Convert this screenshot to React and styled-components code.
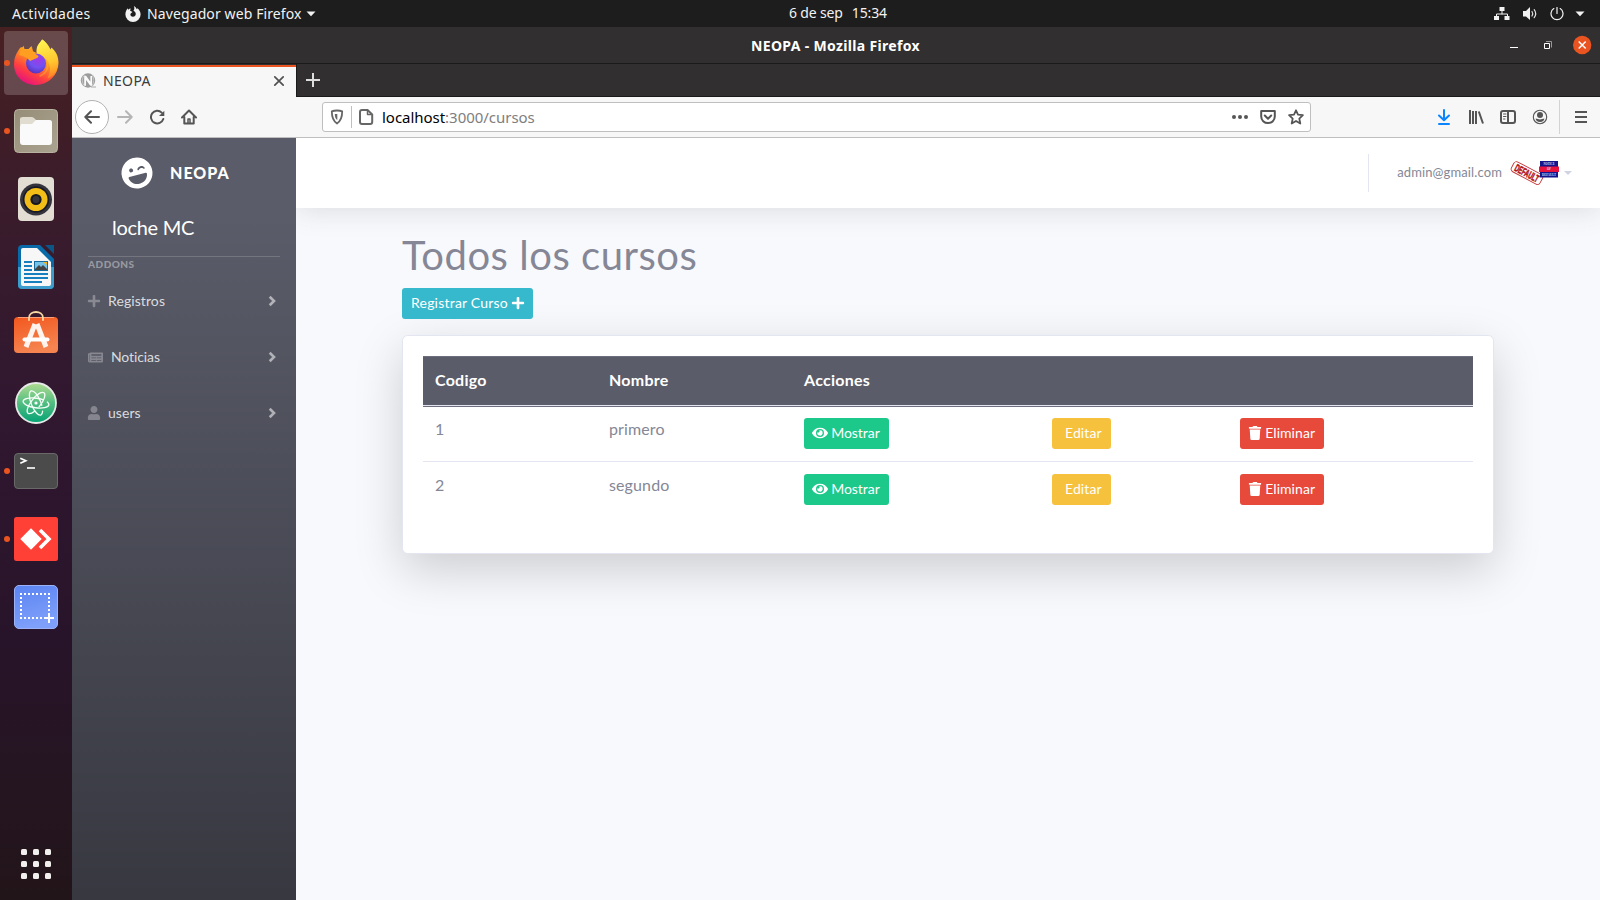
import React from "react";
import styled, { createGlobalStyle } from "styled-components";
import { FaEye, FaLaughWink, FaNewspaper, FaPlus, FaTrash, FaUser } from "react-icons/fa";

const GlobalStyle = createGlobalStyle`
  *, *::before, *::after { box-sizing: border-box; }
  html, body { margin: 0; padding: 0; overflow: hidden; }
  body { background: #1d1d1d; }
  svg { display: block; flex: none; }
`;

const uiFont = `"Noto Sans", "Open Sans", sans-serif`;
const webFont = `Lato, "Open Sans", sans-serif`;

const Desktop = styled.div`
  width: 1600px;
  height: 900px;
  display: grid;
  grid-template-rows: 27px 873px;
  overflow: hidden;
`;

/* ---------- system bar ---------- */
const SystemBar = styled.header`
  display: flex;
  align-items: center;
  background: #1d1d1d;
  color: #f2f2f2;
  font: 14px/26px ${uiFont};
  white-space: pre;
`;
const Activities = styled.span`
  width: 125px;
  padding-left: 12px;
  letter-spacing: 0.35px;
`;
const AppMenu = styled.div`
  display: flex;
  align-items: center;
  width: 664px;
  letter-spacing: 0.11px;
  svg:first-child { margin-right: 6px; }
  svg:last-child { margin-left: 4px; }
`;
const Clock = styled.span`
  flex: 1;
  display: flex;
  gap: 9px;
  padding-bottom: 2px;
  letter-spacing: -0.15px;
`;
const Tray = styled.div`
  display: flex;
  align-items: center;
  padding-right: 15px;
  svg + svg { margin-left: 12px; }
  svg:last-child { margin-left: 11px; }
`;

/* ---------- dock ---------- */
const Body = styled.div`
  display: grid;
  grid-template-columns: 72px 1528px;
`;
const Dock = styled.nav`
  display: flex;
  flex-direction: column;
  gap: 4px;
  padding: 4px;
  background: linear-gradient(180deg, #472022 0%, #3a1c2b 20%, #311830 42%, #28142a 70%, #221519 100%);
`;
const DockItem = styled.div`
  height: 64px;
  border-radius: 4px;
  background: ${(p) => (p.$active ? "rgba(255,255,255,0.19)" : "transparent")};
  svg { overflow: visible; }
`;
const AppsButton = styled.div`
  margin-top: auto;
  height: 64px;
`;

/* ---------- browser ---------- */
const Browser = styled.section`
  display: grid;
  grid-template-rows: 37px 33px 41px 762px;
`;
const TitleBar = styled.div`
  display: flex;
  align-items: center;
  background: #322f30;
  border-bottom: 1px solid #1b1a1b;
  color: #fff;
  font: 700 14px/36px ${uiFont};
`;
const WindowTitle = styled.span`
  flex: 1;
  padding: 2px 0 0 679px;
  line-height: 34px;
  letter-spacing: 0.34px;
`;
const WindowControls = styled.div`
  display: flex;
  align-items: center;
  padding-right: 8px;
`;
const TabStrip = styled.div`
  display: flex;
  background: #322f30;
`;
const Tab = styled.div`
  width: 224px;
  margin-top: 1px;
  height: 32px;
  display: flex;
  align-items: center;
  padding: 0 11px 2px 8px;
  background: #f7f7f7;
  border-top: 2px solid #e95420;
  color: #3c3c3c;
  font: 14px/28px ${uiFont};
  letter-spacing: 0.35px;
  svg:last-child { margin-left: auto; }
`;
const TabLabel = styled.span`padding-left: 7px;`;
const TabFill = styled.div`
  flex: 1;
  padding: 9px 0 0 9px;
  border-bottom: 1px solid #1b1a1b;
  border-left: 1px solid #1b1a1b;
`;
const Toolbar = styled.div`
  display: flex;
  align-items: center;
  padding: 0 11px 0 3px;
  background: #f7f7f7;
  border-bottom: 1px solid #bfbfbf;
`;
const BackButton = styled.div`
  width: 34px;
  height: 34px;
  display: grid;
  place-items: center;
  border: 1px solid #b2b2b2;
  border-radius: 50%;
  background: #fff;
`;
const NavButtons = styled.div`
  display: flex;
  gap: 16px;
  margin-left: 8px;
`;
const UrlBar = styled.div`
  width: 989px;
  height: 30px;
  margin-left: 125px;
  display: flex;
  align-items: center;
  padding: 0 6px;
  border: 1px solid #bfbfbf;
  border-radius: 3px;
  background: #fff;
  font: 15px/28px ${uiFont};
  color: #7e7e7e;
`;
const UrlDivider = styled.i`
  width: 1px;
  height: 22px;
  margin: 0 6px;
  background: #bfbfbf;
`;
const Url = styled.span`
  flex: 1;
  padding-left: 8px;
  letter-spacing: -0.03px;
  b { font-weight: 400; color: #000; }
`;
const UrlActions = styled.div`
  display: flex;
  gap: 12px;
`;
const ToolbarActions = styled.div`
  display: flex;
  gap: 16px;
  margin-left: auto;
`;
const ToolbarDivider = styled.i`
  width: 1px;
  height: 34px;
  margin: 0 13px 0 11px;
  background: #d3d3d3;
`;

/* ---------- web page ---------- */
const Page = styled.div`
  display: grid;
  grid-template-columns: 224px 1304px;
  overflow: hidden;
  font-family: ${webFont};
`;
const Sidebar = styled.aside`
  position: relative;
  z-index: 1;
  background: linear-gradient(180deg, #5a5c69 10%, #373840 100%);
  color: #fff;
`;
const Brand = styled.div`
  height: 70px;
  display: flex;
  align-items: center;
  padding: 0 0 1px 49px;
  font-weight: 900;
  font-size: 16px;
  letter-spacing: 1px;
  svg { margin-right: 17px; transform: rotate(-15deg); }
`;
const BrandText = styled.span`padding-bottom: 1px;`;
const UserName = styled.div`
  height: 48px;
  padding: 7px 0 0 40px;
  font-size: 20px;
  line-height: 24px;
  letter-spacing: -0.3px;
`;
const Divider = styled.hr`
  margin: 0 16px;
  border: 0;
  border-top: 1px solid rgba(255, 255, 255, 0.17);
`;
const Heading = styled.div`
  height: 16px;
  padding-left: 16px;
  color: rgba(255, 255, 255, 0.4);
  font-size: 10px;
  font-weight: 900;
  line-height: 15px;
  letter-spacing: 0.5px;
`;
const NavItem = styled.div`
  height: 56px;
  display: flex;
  align-items: center;
  padding: 0 20px 0 16px;
  color: rgba(255, 255, 255, 0.8);
  font-size: 14px;
  letter-spacing: ${(p) => p.$spacing || 0}px;
  > svg:first-child { color: rgba(255, 255, 255, 0.3); margin: 0 ${(p) => (p.$wide ? "8px 0 0" : "7px 0 -1px")}; }
  > svg:last-child { color: rgba(255, 255, 255, 0.55); margin-left: auto; }
`;
const NavText = styled.span`padding-bottom: 1px;`;
const Content = styled.main`
  display: flex;
  flex-direction: column;
  background: #f8f9fc;
  overflow: hidden;
`;
const Topbar = styled.div`
  height: 70px;
  flex: none;
  display: flex;
  align-items: center;
  justify-content: flex-end;
  padding-right: 28px;
  background: #fff;
  box-shadow: 0 2.4px 28px 0 rgba(58, 59, 69, 0.15);
`;
const TopbarDivider = styled.i`
  width: 1px;
  height: 38px;
  margin-right: 28px;
  background: #e3e6f0;
`;
const Email = styled.span`
  padding-bottom: 3px;
  margin-right: 9px;
  color: #858796;
  font-size: 13px;
  letter-spacing: 0.12px;
`;
const Caret = styled.i`
  width: 8px;
  margin-left: 5px;
  border: 4px solid transparent;
  border-top-color: #d1d3e2;
  border-bottom: 0;
`;
const Container = styled.div`
  width: 1140px;
  margin: 0 auto;
  padding: 24px;
`;
const Title = styled.h1`
  height: 48px;
  margin: 0 0 8px;
  color: #858796;
  font-size: 40px;
  font-weight: 400;
  line-height: 46px;
  letter-spacing: 0.53px;
`;
const tones = { info: "#36b9cc", success: "#1cc88a", warning: "#f6c23e", danger: "#e74a3b" };
const Button = styled.a`
  height: 31px;
  display: inline-flex;
  align-items: center;
  gap: 4px;
  padding: 0 9px;
  border-radius: 3px;
  vertical-align: top;
  background: ${(p) => tones[p.$tone]};
  color: #fff;
  font-size: 14px;
  line-height: 29px;
  letter-spacing: ${(p) => p.$spacing || 0}px;
  svg { margin: 0 -0.9px 1px; }
`;
const ButtonText = styled.span`
  padding: 0 0 2px ${(p) => (p.$indent ? 4 : 0)}px;
`;
const Card = styled.div`
  height: 219px;
  margin-top: 16px;
  padding: 20px;
  border: 1px solid #e3e6f0;
  border-radius: 5.6px;
  background: #fff;
  box-shadow: 0 16px 48px rgba(0, 0, 0, 0.175);
`;
const Table = styled.table`
  width: 1050px;
  table-layout: fixed;
  border-spacing: 0;
  color: #858796;
  font-size: 16px;
  line-height: 22px;
`;
const Th = styled.th`
  height: 50px;
  padding: 0 12px 3px;
  border-top: 1px solid #6c6e7e;
  border-bottom: 1px solid #e3e6f0;
  background: #5a5c69;
  color: #fff;
  text-align: left;
  font-weight: 700;
  letter-spacing: 0.25px;
`;
const Td = styled.td`
  padding: ${(p) => (p.$first ? 11 : 12)}px 12px 12px;
  border-top: 1px solid ${(p) => (p.$first ? "#6c6e7e" : "#e3e6f0")};
  vertical-align: top;
  letter-spacing: 0.12px;
`;

/* ---------- drawings ---------- */
const stroke = (color, width = 2) => ({ fill: "none", stroke: color, strokeWidth: width, strokeLinecap: "round", strokeLinejoin: "round" });
const INK = "#555";

const DownCaret = () => <svg width="10" height="6" viewBox="0 0 10 6"><path d="M.5.5h9L5 5.3z" fill="#f2f2f2" /></svg>;

const Chevron = () => <svg width="8" height="12" viewBox="0 0 8 12"><path d="M1.700 1.800L6 6l-4.300 4.200" fill="none" stroke="currentColor" strokeWidth="2.600" /></svg>;

const FirefoxGlyph = () => (
  <svg width="16" height="16" viewBox="0 0 16 16">
    <path fill="#f2f2f2" d="M8.900 0c1.600 1.100 2.500 2.100 2.900 3.200l.7-.9c1.800 1.500 3.100 3.700 3.100 6.100a7.600 7.600 0 0 1-15.200 0C.4 6 1.300 4 2.500 2.200l.6 1.600C4 3 4.900 2.600 5.700 2.600L5.100 4.700 7.500 6 6 7.200c-1.200.9-.6 3.400 1.800 3.500 2.100 0 3.300-1.600 2.900-3.500-.3-1.300-1.100-2-2.300-2.500 1-.6 1.300-2.700.5-4.700z" />
  </svg>
);

const TrayIcons = () => (
  <>
    <svg width="16" height="14" viewBox="0 0 16 14"><path d="M8 4v3M2.500 9V7h11v2" {...stroke("#f2f2f2", 1)} /><path fill="#f2f2f2" d="M5.500 0h5v4h-5zM0 9h5v4H0zM10.500 9h5v4h-5z" /></svg>
    <svg width="16" height="14" viewBox="0 0 16 14"><path fill="#f2f2f2" d="M1 4h3l4-4v13L4 9.500H1z" /><path d="M10 4.500q1.500 2.200 0 4.500M12.200 2.700q3 4 0 8" {...stroke("#e2e2e2", 1.200)} /></svg>
    <svg width="14" height="14" viewBox="0 0 14 14"><path d="M7 .5v6M3.800 1.600a6 6 0 1 0 6.400 0" {...stroke("#f2f2f2", 1.200)} /></svg>
    <DownCaret />
  </>
);

const FirefoxIcon = () => (
  <svg width="64" height="64" viewBox="0 0 64 64">
    <defs>
      <linearGradient id="ffBody" x1=".8" y1=".1" x2=".3" y2="1"><stop offset="0" stopColor="#ffe83b" /><stop offset=".4" stopColor="#ff9a1f" /><stop offset=".72" stopColor="#ff4040" /><stop offset="1" stopColor="#e5117f" /></linearGradient>
      <linearGradient id="ffFlame" x1=".5" y1="0" x2=".7" y2="1"><stop offset="0" stopColor="#fff44f" /><stop offset=".6" stopColor="#ffc52f" /><stop offset="1" stopColor="#ff8a24" stopOpacity=".7" /></linearGradient>
      <radialGradient id="ffGlobe" cx=".6" cy=".3" r=".8"><stop offset="0" stopColor="#a238e8" /><stop offset=".5" stopColor="#7251f0" /><stop offset="1" stopColor="#512bb0" /></radialGradient>
    </defs>
    <path fill="url(#ffBody)" d="M38 8.500c5 3 7 7 8.500 10l1-2c5 4.500 7 9 7 15.500A22.500 22.500 0 0 1 32 54C19 54 10 45 10 33c0-6 2-10 4-13l2-3c0 0 1-1 3-1l.5-1.500 1 3.500h4l3-3 1 5 4 2 1-6z" />
    <path fill="url(#ffFlame)" d="M38.500 8.500c5 4 6.500 8 8 11l1-2c5 5 7 11 6 17-1 7-5 11-10 13 4-8 3-14-1-19-4-4-10-4-10-8.500 0-5 2-7 6-11.500z" />
    <circle cx="32" cy="32.500" r="10" fill="url(#ffGlobe)" />
    <path fill="#ff9e20" d="M15 24l2-6 4 2 4-1 3-3 1 5 4 3c2 1 2 2 0 3l-7 3c-3-4-7-5-11-6z" />
    <path d="M42 26c4 9 1 16-6 19" {...stroke("#ffc83b", 1.500)} opacity=".4" />
  </svg>
);
const FilesIcon = () => (
  <svg width="64" height="64" viewBox="0 0 64 64">
    <defs><linearGradient id="files" x1="0" y1="0" x2="1" y2="1"><stop offset="0" stopColor="#968d78" /><stop offset="1" stopColor="#aaa38f" /></linearGradient></defs>
    <rect x="10.500" y="10.500" width="43" height="43" rx="4" fill="url(#files)" stroke="#b8b2a0" />
    <path d="M16 26V20q0-2 3-2h8q2 0 3 1l2 2h13q3 0 3 3v2z" fill="#e0dccf" />
    <path d="M16 27q0-2 2-2h10l4-4h13q3 0 3 3v19q0 3-3 3H19q-3 0-3-3z" fill="#fafafa" />
  </svg>
);
const MusicIcon = () => (
  <svg width="64" height="64" viewBox="0 0 64 64">
    <rect x="14" y="10" width="36" height="44" rx="4" fill="#e2ded3" />
    <circle cx="32" cy="32.500" r="16" fill="#34343c" /><circle cx="32" cy="32.500" r="13.200" fill="#191a28" />
    <circle cx="32" cy="32.500" r="11.500" fill="#f2bd17" /><circle cx="32" cy="32.500" r="5.600" fill="#17171e" /><circle cx="32" cy="32.500" r="3.500" fill="#32333b" />
  </svg>
);
const WriterIcon = () => (
  <svg width="64" height="64" viewBox="0 0 64 64">
    <path d="M14 14q0-4 4-4h18l14 14v26q0 4-4 4H18q-4 0-4-4z" fill="#0a6aa8" />
    <path d="M14 32h36v18q0 4-4 4H18q-4 0-4-4z" fill="#3c9ccb" />
    <path d="M17 15q0-2 2-2h14l14 14v22q0 2-2 2H19q-2 0-2-2z" fill="#f7f7f7" />
    <path d="M41 10h9v9z" fill="#0c5687" />
    <path d="M20 27h8M20 31h8M20 35h8M20 39h24M20 43h24M20 47h18" stroke="#1580bd" strokeWidth="2" />
    <path d="M30 26h14v10H30z" fill="#176b9b" /><path d="M31 27h12v8H31z" fill="#76c3ea" /><path d="M31 34l4-4 2 2 2-2 4 4v1H31z" fill="#444" /><path d="M39 27h4v3z" fill="#f3b51b" />
  </svg>
);
const StoreIcon = () => (
  <svg width="64" height="64" viewBox="0 0 64 64">
    <defs><linearGradient id="store" x1="0" y1="0" x2=".3" y2="1"><stop offset="0" stopColor="#f2571e" /><stop offset="1" stopColor="#f58450" /></linearGradient></defs>
    <rect x="10" y="14" width="44" height="36" rx="4" fill="url(#store)" /><path d="M14 14.500h36" stroke="#f8a17b" />
    <path d="M25 17v-2c0-8 14-8 14 0v2" {...stroke("#f7d8a5", 1.800)} />
    <path d="M31 21l-9 23M33 21l9 23" stroke="#fff4ed" strokeWidth="5" /><path d="M20.500 36.500h23" {...stroke("#fff", 4)} />
  </svg>
);
const AtomIcon = () => (
  <svg width="64" height="64" viewBox="0 0 64 64">
    <defs><linearGradient id="atom" x1="0" y1="0" x2="0" y2="1"><stop offset="0" stopColor="#b0dc91" /><stop offset=".5" stopColor="#53bd81" /><stop offset="1" stopColor="#02a275" /></linearGradient></defs>
    <circle cx="32" cy="32" r="20" fill="url(#atom)" stroke="#e6e9e6" strokeWidth="1.800" />
    <g transform="rotate(8 32 32)" {...stroke("#f4fff8", 1.300)}>
      <ellipse cx="32" cy="32" rx="13" ry="4.800" strokeDasharray="50 5" /><ellipse cx="32" cy="32" rx="13" ry="4.800" transform="rotate(60 32 32)" strokeDasharray="48 6" /><ellipse cx="32" cy="32" rx="13" ry="4.800" transform="rotate(120 32 32)" strokeDasharray="45 6" />
    </g>
    <circle cx="32" cy="32" r="1.600" fill="#fff" />
  </svg>
);
const TerminalIcon = () => (
  <svg width="64" height="64" viewBox="0 0 64 64">
    <rect x="10.500" y="14.500" width="43" height="35" rx="3.500" fill="#4b4b4b" stroke="#696969" />
    <path d="M16.300 19.300l5.500 2.500-5.500 2.500" fill="none" stroke="#fff" strokeWidth="1.700" /><path d="M23 29h8" stroke="#fff" strokeWidth="1.600" />
  </svg>
);
const RemoteIcon = () => (
  <svg width="64" height="64" viewBox="0 0 64 64">
    <rect x="10" y="10" width="44" height="44" rx="2.500" fill="#ff4037" />
    <path d="M27 21.300L37.700 32 27 42.700 16.300 32z" fill="#fff" /><path d="M36 23l9 9-9 9" fill="none" stroke="#fff" strokeWidth="3.600" />
  </svg>
);
const ScreenshotIcon = () => (
  <svg width="64" height="64" viewBox="0 0 64 64">
    <defs><linearGradient id="shot" x1="0" y1="0" x2=".3" y2="1"><stop offset="0" stopColor="#5b84f2" /><stop offset="1" stopColor="#7fa0fa" /></linearGradient></defs>
    <rect x="10.500" y="10.500" width="43" height="43" rx="4.500" fill="url(#shot)" stroke="#9ab3f8" />
    <path d="M16 19h30M17 22v22M45 22v18M16 43h24" fill="none" stroke="#fff" strokeWidth="2" strokeDasharray="2 2" /><path d="M45 38v10M40 43h10" stroke="#fff" strokeWidth="2" />
  </svg>
);
const RunningDot = styled.i`
  position: absolute;
  left: 4px;
  width: 6px;
  height: 6px;
  margin-top: 29px;
  border-radius: 50%;
  background: #e95420;
`;
const AppsGrid = () => (
  <svg width="64" height="64" viewBox="0 0 64 64">
    {[20, 32, 44].flatMap((y) => [20, 32, 44].map((x) => <rect key={`${x}-${y}`} x={x - 3} y={y - 3} width="6" height="6" rx="1.500" fill="#f2f0ef" />))}
  </svg>
);

const Favicon = () => (
  <svg width="16" height="16" viewBox="0 0 16 16">
    <circle cx="8" cy="7.500" r="7.200" fill="#9c9c9c" /><path d="M12.500 2.500q3 5-.5 10.500M4 2.500q-3.500 5 0 10" {...stroke("#c9c9c9", 0.9)} />
    <path d="M4.200 12.800V2.700h1.900l4.300 6V3h1.700v9.800h-1.800L6 6.900v5.900z" fill="#fafafa" /><path d="M11 14h5" stroke="#aaa" />
  </svg>
);
const Arrow = ({ flip, color }) => (
  <svg width="16" height="16" viewBox="0 0 16 16"><g transform={flip ? "rotate(180 8 8)" : undefined}><path d="M15 8H1.500M7 2.200L1.300 8 7 13.800" {...stroke(color)} /></g></svg>
);
const Icon = ({ children, color = INK }) => <svg width="16" height="16" viewBox="0 0 16 16" {...stroke(color)}>{children}</svg>;

const StampArt = styled.svg`overflow: visible;`;
const Stamp = () => (
  <StampArt width="48" height="26" viewBox="0 0 48 26">
    <g transform="rotate(28 16 13)" fontFamily="Liberation Sans, sans-serif" fontWeight="700">
      <rect x="-0.200" y="7.600" width="32.400" height="11" rx="3" fill="#fff" stroke="#c2373b" strokeWidth=".9" />
      <text x="3" y="16.900" fontSize="10.500" fill="#b3141b" stroke="#b3141b" strokeWidth=".6" textLength="26" lengthAdjust="spacingAndGlyphs">DEFAULT</text>
    </g>
    <rect x="29" y="1" width="18" height="16.500" fill="#14148c" /><rect x="28" y="6.500" width="20" height="5.500" fill="#e8123f" />
    <g fill="#dcdcf2" fontFamily="Liberation Serif, serif" fontWeight="700" fontSize="3" textAnchor="middle">
      <text x="38" y="4.900" textLength="11" lengthAdjust="spacingAndGlyphs">NOTICE</text><text x="38" y="10.300">OF</text><text x="38" y="15.800" textLength="14" lengthAdjust="spacingAndGlyphs">DEFAULT</text>
    </g>
  </StampArt>
);

const dock = [
  { Art: FirefoxIcon, running: true, active: true },
  { Art: FilesIcon, running: true },
  { Art: MusicIcon },
  { Art: WriterIcon },
  { Art: StoreIcon },
  { Art: AtomIcon },
  { Art: TerminalIcon, running: true },
  { Art: RemoteIcon, running: true },
  { Art: ScreenshotIcon },
];
const courses = [[1, "primero"], [2, "segundo"]];

export default function App() {
  return (
    <Desktop>
      <GlobalStyle />
      <SystemBar>
        <Activities>Actividades</Activities>
        <AppMenu><FirefoxGlyph />Navegador web Firefox<DownCaret /></AppMenu>
        <Clock><span>6 de sep</span><span>15:34</span></Clock>
        <Tray><TrayIcons /></Tray>
      </SystemBar>
      <Body>
        <Dock>
          {dock.map(({ Art, running, active }, i) => (
            <DockItem key={i} $active={active}>{running && <RunningDot />}<Art /></DockItem>
          ))}
          <AppsButton><AppsGrid /></AppsButton>
        </Dock>
        <Browser>
          <TitleBar>
            <WindowTitle>NEOPA - Mozilla Firefox</WindowTitle>
            <WindowControls>
              <svg width="82" height="20" viewBox="0 0 82 20">
                <path d="M0 12.500h8" stroke="#fff" />
                <path d="M36 6.500h5.500v6" fill="none" stroke="#999" /><path d="M34.500 8.500h5v5h-5z" fill="none" stroke="#fff" />
                <circle cx="72.200" cy="10" r="9.200" fill="#e95420" /><path d="M68.700 6.500l7 7m0-7l-7 7" stroke="#fff" strokeWidth="1.500" />
              </svg>
            </WindowControls>
          </TitleBar>
          <TabStrip>
            <Tab>
              <Favicon /><TabLabel>NEOPA</TabLabel>
              <svg width="12" height="12" viewBox="0 0 12 12"><path d="M1.800 1.800l8.400 8.400m0-8.400l-8.400 8.400" {...stroke("#505050", 1.700)} /></svg>
            </Tab>
            <TabFill><svg width="14" height="14" viewBox="0 0 14 14"><path d="M7 0v14M0 7h14" stroke="#dedede" strokeWidth="2" /></svg></TabFill>
          </TabStrip>
          <Toolbar>
            <BackButton><Arrow color={INK} /></BackButton>
            <NavButtons>
              <Arrow flip color="#b5b5b5" />
              <Icon><path d="M14.300 10A6.300 6.300 0 1 1 12.700 3.600" /><path d="M15.300 1.700v5.300H10z" fill={INK} stroke="none" /></Icon>
              <Icon><path d="M1 8.500L8 1.500l7 7M3.300 8v6.500h9.400V8" /><path d="M7 14v-4h2v4" strokeWidth="1.500" /></Icon>
            </NavButtons>
            <UrlBar>
              <Icon color="#666"><path d="M8 1.500c2 0 4 .3 5.200.8 0 6.200-1.200 9.700-5.200 12.200-4-2.500-5.200-6-5.200-12.200C4 1.800 6 1.500 8 1.500z" strokeWidth="1.800" /><path d="M8.300 5v6c-2-1.200-2.400-3.500-2.500-6z" fill="#666" stroke="none" /></Icon>
              <UrlDivider />
              <Icon color="#666"><path d="M4 1h5.500L14.200 5.500V13q0 2-2 2H4Q2 15 2 13V3q0-2 2-2z" /><path d="M9.500 1v4.500h4" strokeWidth="1.500" /></Icon>
              <Url><b>localhost</b>:3000/cursos</Url>
              <UrlActions>
                <Icon><g fill={INK} stroke="none"><circle cx="2" cy="8" r="2" /><circle cx="8" cy="8" r="2" /><circle cx="14" cy="8" r="2" /></g></Icon>
                <Icon><path d="M1.200 2h13.600v5.500a6.800 6.600 0 0 1-13.600 0z" /><path d="M4.800 6.500L8 9.700l3.200-3.200" /></Icon>
                <Icon><path d="M8 1.300l2 4.400 4.900.5-3.600 3.400 1 4.900L8 12l-4.300 2.500 1-4.900L1.100 6.200 6 5.700z" strokeWidth="1.800" /></Icon>
              </UrlActions>
            </UrlBar>
            <ToolbarActions>
              <Icon color="#0a84ff"><path d="M8 1v10M3 6.500L8 11.300l5-4.800M3 15h10" /></Icon>
              <Icon><path d="M2 1v14M5 2v13M8 2v13M10.800 2.500L15 14.500" strokeLinecap="butt" /></Icon>
              <Icon><rect x="1" y="2" width="14" height="12" rx="2" /><path d="M8 2v12" /><path d="M3.500 5H6M3.500 7.500H6M3.500 10H5" strokeWidth="1" /></Icon>
              <Icon><circle cx="8" cy="8" r="6.700" strokeWidth="1.100" /><circle cx="8" cy="6" r="3" fill={INK} stroke="none" /><path d="M3.600 9.600q4.400 1.600 8.800 0Q12 13 8 13T3.600 9.600z" fill={INK} stroke="none" /></Icon>
            </ToolbarActions>
            <ToolbarDivider />
            <Icon><path d="M2 3h12M2 8h12M2 13h12" strokeLinecap="butt" /></Icon>
          </Toolbar>
          <Page>
            <Sidebar>
              <Brand><FaLaughWink size={32} /><BrandText>NEOPA</BrandText></Brand>
              <UserName>loche MC</UserName>
              <Divider />
              <Heading>ADDONS</Heading>
              <NavItem $spacing={0.09}><FaPlus size={14} /><NavText>Registros</NavText><Chevron /></NavItem>
              <NavItem $spacing={-0.1} $wide><FaNewspaper size={15} /><NavText>Noticias</NavText><Chevron /></NavItem>
              <NavItem $spacing={0.05}><FaUser size={14} /><NavText>users</NavText><Chevron /></NavItem>
            </Sidebar>
            <Content>
              <Topbar>
                <TopbarDivider /><Email>admin@gmail.com</Email><Stamp /><Caret />
              </Topbar>
              <Container>
                <Title>Todos los cursos</Title>
                <Button $tone="info" $spacing={0.21}><ButtonText>Registrar Curso</ButtonText><FaPlus size={14} /></Button>
                <Card>
                  <Table>
                    <colgroup><col width="174" /><col width="195" /><col width="248" /><col width="188" /><col width="245" /></colgroup>
                    <thead><tr><Th>Codigo</Th><Th>Nombre</Th><Th>Acciones</Th><Th /><Th /></tr></thead>
                    <tbody>
                      {courses.map(([code, name], i) => (
                        <tr key={code}>
                          <Td $first={i === 0}>{code}</Td>
                          <Td $first={i === 0}>{name}</Td>
                          <Td $first={i === 0}><Button $tone="success" $spacing={-0.05}><FaEye size={16} /><ButtonText>Mostrar</ButtonText></Button></Td>
                          <Td $first={i === 0}><Button $tone="warning" $spacing={0.12}><ButtonText $indent>Editar</ButtonText></Button></Td>
                          <Td $first={i === 0}><Button $tone="danger" $spacing={0.05}><FaTrash size={14} /><ButtonText>Eliminar</ButtonText></Button></Td>
                        </tr>
                      ))}
                    </tbody>
                  </Table>
                </Card>
              </Container>
            </Content>
          </Page>
        </Browser>
      </Body>
    </Desktop>
  );
}
